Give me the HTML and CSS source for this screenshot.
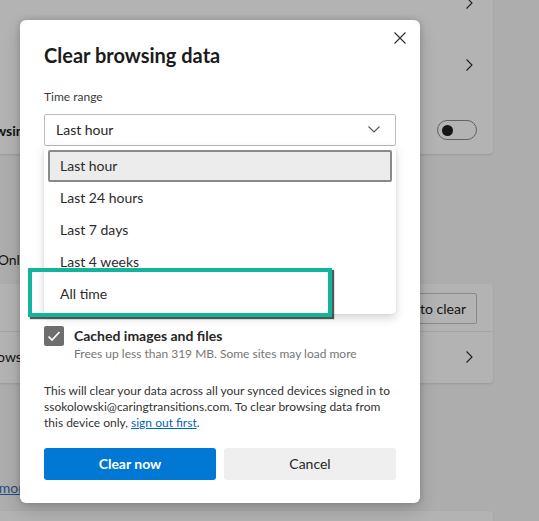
FILE: index.html
```
<!DOCTYPE html>
<html lang="en">
<head>
<meta charset="utf-8">
<title>Clear browsing data</title>
<link rel="stylesheet" href="styles.css">
</head>
<body>
<div class="settings">
  <section class="card card-top">
    <div class="row row-a">
      <div class="row-text">Tracking prevention exceptions</div>
      <svg class="chev" viewBox="0 0 16 16"><path d="M5.5 2.5 L11 8 L5.5 13.5"/></svg>
    </div>
    <div class="row row-b">
      <div class="row-text">Blocked trackers</div>
      <svg class="chev" viewBox="0 0 16 16"><path d="M5.5 2.5 L11 8 L5.5 13.5"/></svg>
    </div>
    <div class="row row-c">
      <div class="row-text strong">Always use &ldquo;Strict&rdquo; tracking prevention when browsing InPrivate</div>
      <span class="toggle"><span class="knob"></span></span>
    </div>
  </section>
  <p class="desc desc-only">This includes history, passwords, cookies, and more. Only data from this profile will be deleted. <span class="lnk">Manage your data</span></p>
  <section class="card card-clear">
    <div class="row row-d">
      <div class="row-text">Clear browsing data now</div>
      <span class="btn-bg">Choose what to clear</span>
    </div>
    <div class="row row-e">
      <div class="row-text">Choose what to clear every time you close the browser</div>
      <svg class="chev" viewBox="0 0 16 16"><path d="M5.5 2.5 L11 8 L5.5 13.5"/></svg>
    </div>
  </section>
  <p class="desc desc-more">Select your privacy settings for Microsoft Edge. <span class="lnk ul">Learn more about these settings</span></p>
  <section class="card card-last"></section>
</div>

<div class="dialog">
  <h1 class="title">Clear browsing data</h1>
  <svg class="close" viewBox="0 0 12 12"><path d="M0.5 0.5 L11.5 11.5 M11.5 0.5 L0.5 11.5"/></svg>
  <div class="label">Time range</div>
  <div class="select">
    <span>Last hour</span>
    <svg class="select-chev" viewBox="0 0 12 7"><path d="M0.5 0.5 L6 6 L11.5 0.5"/></svg>
  </div>
  <ul class="menu">
    <li class="item selected">Last hour</li>
    <li class="item">Last 24 hours</li>
    <li class="item">Last 7 days</li>
    <li class="item">Last 4 weeks</li>
    <li class="item">All time</li>
  </ul>
  <div class="callout"></div>
  <div class="check-row">
    <span class="checkbox"><svg viewBox="0 0 20 20"><path d="M4.5 10.5 L8 14 L15.5 6"/></svg></span>
    <div class="check-text">
      <div class="check-title">Cached images and files</div>
      <div class="check-desc">Frees up less than 319 MB. Some sites may load more</div>
    </div>
  </div>
  <p class="note">This will clear your data across all your synced devices signed in to ssokolowski@caringtransitions.com. To clear browsing data from this device only, <a class="link" href="#">sign out first</a>.</p>
  <div class="buttons">
    <button class="btn primary">Clear now</button>
    <button class="btn secondary">Cancel</button>
  </div>
</div>
</body>
</html>
```
FILE: styles.css
```
* { box-sizing: border-box; }
html, body {
  margin: 0;
  padding: 0;
  overflow: hidden;
}
body {
  width: 539px;
  height: 521px;
  background: #adadad;
  font-family: Lato, "Liberation Sans", sans-serif;
  color: #121212;
  position: relative;
}

/* background settings page (dimmed) */
.settings {
  margin-left: -400px;
  width: 893px;
}
.card {
  background: #b3b3b3;
  border-radius: 4px;
  box-shadow: 0 1px 2px rgba(0,0,0,0.12);
}
.card-top {
  margin-top: -27px;
  height: 181px;
}
.row {
  display: flex;
  align-items: center;
  justify-content: space-between;
  padding: 0 16px 0 20px;
  font-size: 14px;
}
.row-a { height: 60px; }
.row-b { height: 64px; }
.row-c { height: 57px; padding-top: 9px; }
.row-text { white-space: nowrap; }
.strong { font-weight: 700; padding-left: 71px; }
.chev {
  width: 16px;
  height: 16px;
  fill: none;
  stroke: #1e1e1e;
  stroke-width: 1.1;
}
.toggle {
  width: 40px;
  height: 20px;
  border: 1px solid #626262;
  border-radius: 10px;
  display: flex;
  align-items: center;
  padding-left: 4px;
}
.knob {
  width: 11px;
  height: 11px;
  border-radius: 50%;
  background: #151515;
}
.desc {
  margin: 0;
  font-size: 14px;
  line-height: 20px;
  white-space: nowrap;
}
.desc-only {
  padding: 96px 0 0 77px;
  height: 130px;
}
.lnk { color: #1f4f80; }
.ul { text-decoration: underline; }
.card-clear {
  height: 99px;
}
.row-d {
  height: 48px;
  border-bottom: 1px solid #a6a6a6;
}
.row-e { height: 49px; }
.row-e .row-text { padding-left: 78px; }
.btn-bg {
  border: 1px solid #8a8a8a;
  border-radius: 2px;
  height: 31px;
  display: flex;
  align-items: center;
  padding: 0 10px 0 11px;
  margin-top: 1px;
}
.desc-more {
  padding: 95px 0 0 70px;
  height: 128px;
}
.card-last { height: 10px; border-radius: 4px 4px 0 0; }

/* dialog */
.dialog {
  position: absolute;
  left: 20px;
  top: 20px;
  width: 400px;
  background: #fff;
  border-radius: 6px;
  padding: 21px 24px 23px;
  box-shadow: 0 0 6px rgba(0,0,0,0.18), 0 8px 18px rgba(0,0,0,0.16);
  color: #1b1b1b;
}
.title {
  margin: 0;
  font-size: 20px;
  line-height: 28px;
  font-weight: 700;
  color: #1b1b1b;
}
.close {
  position: absolute;
  top: 12px;
  right: 14px;
  width: 12px;
  height: 12px;
  fill: none;
  stroke: #2b2b2b;
  stroke-width: 1.1;
}
.label {
  margin-top: 20px;
  font-size: 12px;
  line-height: 16px;
  color: #3a3a3a;
}
.select {
  margin-top: 9px;
  height: 32px;
  border: 1px solid #bdbdbd;
  border-radius: 2px;
  display: flex;
  align-items: center;
  justify-content: space-between;
  padding: 0 15px 1px 11px;
  font-size: 14px;
  color: #262626;
}
.select-chev {
  width: 12px;
  height: 7px;
  fill: none;
  stroke: #555;
  stroke-width: 1.1;
}
.menu {
  position: absolute;
  left: 24px;
  top: 126px;
  width: 352px;
  height: 168px;
  margin: 0;
  padding: 4px;
  list-style: none;
  background: #fff;
  border-radius: 0 0 4px 4px;
  box-shadow: 0 4px 10px rgba(0,0,0,0.16), 0 0 3px rgba(0,0,0,0.08);
  z-index: 2;
}
.item {
  height: 32px;
  display: flex;
  align-items: center;
  padding: 0 0 1px 12px;
  font-size: 14px;
  color: #2b2b2b;
}
.item.selected {
  background: #ececec;
  border: 2px solid #8a8a8a;
  border-radius: 2px;
  padding-left: 10px;
}
.callout {
  position: absolute;
  left: 8px;
  top: 248px;
  width: 304px;
  height: 49px;
  border: 4px solid #14b39b;
  box-shadow: 2px 2px 1px rgba(30,30,30,0.75);
  z-index: 3;
}
.check-row {
  margin-top: 180px;
  display: flex;
  gap: 10px;
}
.checkbox {
  width: 20px;
  height: 20px;
  border-radius: 2px;
  background: #6e6e6e;
  flex: none;
}
.checkbox svg {
  width: 20px;
  height: 20px;
  fill: none;
  stroke: #fff;
  stroke-width: 1.7;
  display: block;
}
.check-title {
  font-size: 14px;
  line-height: 20px;
  font-weight: 700;
  color: #262626;
}
.check-desc {
  font-size: 12px;
  line-height: 16px;
  color: #767676;
}
.note {
  margin: 21px 0 0;
  font-size: 12px;
  line-height: 16px;
  color: #333;
}
.link {
  color: #0067b8;
  text-decoration: underline;
}
.buttons {
  margin-top: 17px;
  display: flex;
  gap: 8px;
}
.btn {
  flex: 1;
  height: 32px;
  border: none;
  border-radius: 3px;
  font-family: inherit;
  font-size: 14px;
  padding: 0 0 2px;
}
.primary {
  background: #0078d4;
  color: #fff;
  font-weight: 700;
}
.secondary {
  background: #efefef;
  color: #262626;
}
```
